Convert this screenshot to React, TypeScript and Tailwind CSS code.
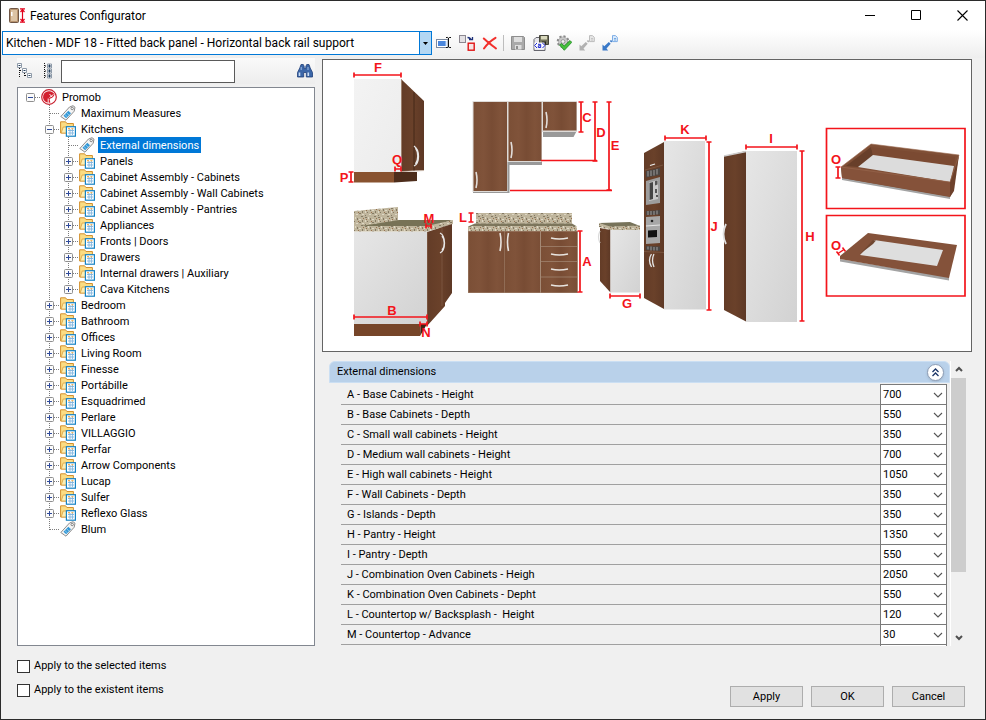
import { useState } from 'react'
import type { ReactNode } from 'react'
import clsx from 'clsx'

type NodeKind = 'root' | 'tag' | 'folder'

interface TreeRow {
  label: string
  depth: number
  kind: NodeKind
  open?: boolean
  last?: boolean
}

interface Dimension {
  code: string
  label: string
  value: number
}

const TREE: TreeRow[] = [
  { label: 'Promob', depth: 0, kind: 'root', open: true },
  { label: 'Maximum Measures', depth: 1, kind: 'tag' },
  { label: 'Kitchens', depth: 1, kind: 'folder', open: true },
  { label: 'External dimensions', depth: 2, kind: 'tag' },
  { label: 'Panels', depth: 2, kind: 'folder' },
  { label: 'Cabinet Assembly - Cabinets', depth: 2, kind: 'folder' },
  { label: 'Cabinet Assembly - Wall Cabinets', depth: 2, kind: 'folder' },
  { label: 'Cabinet Assembly - Pantries', depth: 2, kind: 'folder' },
  { label: 'Appliances', depth: 2, kind: 'folder' },
  { label: 'Fronts | Doors', depth: 2, kind: 'folder' },
  { label: 'Drawers', depth: 2, kind: 'folder' },
  { label: 'Internal drawers | Auxiliary', depth: 2, kind: 'folder' },
  { label: 'Cava Kitchens', depth: 2, kind: 'folder', last: true },
  { label: 'Bedroom', depth: 1, kind: 'folder' },
  { label: 'Bathroom', depth: 1, kind: 'folder' },
  { label: 'Offices', depth: 1, kind: 'folder' },
  { label: 'Living Room', depth: 1, kind: 'folder' },
  { label: 'Finesse', depth: 1, kind: 'folder' },
  { label: 'Portábille', depth: 1, kind: 'folder' },
  { label: 'Esquadrimed', depth: 1, kind: 'folder' },
  { label: 'Perlare', depth: 1, kind: 'folder' },
  { label: 'VILLAGGIO', depth: 1, kind: 'folder' },
  { label: 'Perfar', depth: 1, kind: 'folder' },
  { label: 'Arrow Components', depth: 1, kind: 'folder' },
  { label: 'Lucap', depth: 1, kind: 'folder' },
  { label: 'Sulfer', depth: 1, kind: 'folder' },
  { label: 'Reflexo Glass', depth: 1, kind: 'folder' },
  { label: 'Blum', depth: 1, kind: 'tag', last: true }
]

const DIMENSIONS: Dimension[] = [
  { code: 'A', label: 'Base Cabinets - Height', value: 700 },
  { code: 'B', label: 'Base Cabinets - Depth', value: 550 },
  { code: 'C', label: 'Small wall cabinets - Height', value: 350 },
  { code: 'D', label: 'Medium wall cabinets - Height', value: 700 },
  { code: 'E', label: 'High wall cabinets - Height', value: 1050 },
  { code: 'F', label: 'Wall Cabinets - Depth', value: 350 },
  { code: 'G', label: 'Islands - Depth', value: 350 },
  { code: 'H', label: 'Pantry - Height', value: 1350 },
  { code: 'I', label: 'Pantry - Depth', value: 550 },
  { code: 'J', label: 'Combination Oven Cabinets - Heigh', value: 2050 },
  { code: 'K', label: 'Combination Oven Cabinets - Depht', value: 550 },
  { code: 'L', label: 'Countertop w/ Backsplash -  Height', value: 120 },
  { code: 'M', label: 'Countertop - Advance', value: 30 }
]

const Icon = ({ children }: { children: ReactNode }) => (
  <svg
    aria-hidden="true"
    className="block shrink-0"
    height="16"
    viewBox="0 0 16 16"
    width="16"
  >
    {children}
  </svg>
)

const AppIcon = () => (
  <Icon>
    <rect fill="#b8946f" height="14" rx="1" stroke="#6f5645" width="9" x="0.5" y="0.5" />
    <rect fill="#dcc3a4" height="11" width="6" x="2" y="2" />
    <rect fill="#fff" height="4" width="1.5" x="2" y="4" />
    <path d="M11 .8h5M11 14.2h5M13.5 1.5v12M11.5 4l2-2.3 2 2.3M11.5 11l2 2.3 2-2.3" fill="none" stroke="#e2001a" strokeWidth="1.2" />
  </Icon>
)

const RootIcon = () => (
  <Icon>
    <circle cx="8" cy="8" fill="#fff" r="7.3" stroke="#c8202f" strokeWidth="1.2" />
    <path d="M8 2.2a5.8 5.8 0 1 0 1.3 11.4L8.6 10l3-1.2 2-3A5.9 5.9 0 0 0 8 2.2z" fill="#d3202f" />
    <path d="M7.2 14V9.5M8.5 8.5l4-3M8.5 5l3 3.5" stroke="#fff" strokeWidth="0.9" />
    <path d="M9.5 9.5l3.800-.5-2 3.500z" fill="#fff" />
  </Icon>
)

const TagIcon = () => (
  <Icon>
    <path d="M.8 11.5L9.5 2 13 .7l2 1.500-.8 4L6 15.200z" fill="#f4f4f4" stroke="#8c8c8c" strokeLinejoin="round" />
    <path d="M3.500 10.800l4.800-5 2.700 2.500-4.800 5z" fill="#3197d6" />
    <path d="M4.800 9.500l2.600 2.400M6.500 7.700l2.500 2.400" stroke="#b5dcf5" strokeWidth="0.7" />
    <circle cx="12.2" cy="3.5" fill="#fff" r="1.2" stroke="#666" strokeWidth="0.8" />
  </Icon>
)

const FolderIcon = () => (
  <Icon>
    <path d="M.6 12V.8h5l1.300 1.700h6.500V12z" fill="#fbdc83" stroke="#d3912f" />
    <path d="M1.200 12l2-6h10V12z" fill="#fdeeb2" stroke="#dba040" strokeWidth="0.8" />
    <rect fill="#fff" height="9.5" stroke="#1783c4" strokeWidth="1.2" width="9" x="6.4" y="5.7" />
    <path d="M8 9.500h6M8 12h6M10 8v6M12.400 8v6" stroke="#7fb3de" strokeWidth="0.9" />
    <path d="M8 7.700h2M11.400 7.700h2" stroke="#eb9a28" strokeWidth="1.1" />
  </Icon>
)

const KIND_ICON: Record<NodeKind, () => ReactNode> = {
  root: RootIcon,
  tag: TagIcon,
  folder: FolderIcon
}

const RenameIcon = () => (
  <Icon>
    <rect fill="#fff" height="8" stroke="#7c8aa0" width="11.5" x="0.5" y="4.5" />
    <rect fill="#4a86dc" height="5" width="8" x="2" y="6" />
    <path d="M9.500 6h1v5h-1z" fill="#bcd6f7" />
    <path d="M10 2.500h1.700l.8.800.8-.8H15M12.500 3v9M10 12.500h1.700l.8-.8.800.8H15" fill="none" stroke="#111" />
  </Icon>
)

const ReplaceIcon = () => (
  <Icon>
    <rect fill="#e3e1e4" height="7" stroke="#8b8790" width="6" x="0.5" y="0.5" />
    <path d="M8.500 2.500c2 0 3 .5 3.500 2.500M10 4.500h3.500V2" fill="none" stroke="#1c2f78" strokeWidth="1.3" />
    <rect fill="#f6e4e4" height="7" stroke="#e01515" strokeWidth="1.4" width="6" x="9.2" y="8.2" />
  </Icon>
)

const DeleteIcon = () => (
  <Icon>
    <path d="M1.800 3.500C5 6.500 9 9.500 14 13.500M13.500 2.800C9 5.500 5 9 2 13.500" fill="none" stroke="#f2302c" strokeLinecap="round" strokeWidth="2" />
  </Icon>
)

const SaveIcon = () => (
  <Icon>
    <path d="M1.500 1.500h12l1 1v12h-13z" fill="#a9a9a9" stroke="#8d8d8d" />
    <path d="M4 2h8v5H4zM5 10h6.500v4.500H5z" fill="#dedede" />
    <path d="M6 11h2v3H6z" fill="#8d8d8d" />
  </Icon>
)

const SaveXmlIcon = () => (
  <Icon>
    <path d="M1 4.500l2-2h9v13H1z" fill="#e6e6ea" stroke="#66666e" />
    <path d="M6.500.5h9v9h-9z" fill="#75755c" stroke="#44443a" />
    <path d="M8 1h6v3.500H8z" fill="#d8d8bc" />
    <path d="M9 6.500h4v3H9z" fill="#222" />
    <path d="M1.500 7.500h10v6h-10z" fill="#fff" />
    <path d="M4 8l-2.400 2.500L4 13M9.500 8l2.400 2.500L9.500 13M5 9.300h2.700v3.200H5.300v-1.700h2" fill="none" stroke="#1b26d0" />
  </Icon>
)

const GearCheckIcon = () => (
  <Icon>
    <circle cx="7" cy="6.5" fill="#b4b4b4" r="5" stroke="#8a8a8a" strokeDasharray="2 1.9" strokeWidth="2.6" />
    <circle cx="7" cy="6.5" fill="#c8c8c8" r="4.3" />
    <circle cx="7" cy="6.5" fill="#f5f5f5" r="1.9" stroke="#8a8a8a" strokeWidth="0.8" />
    <path d="M3.500 10l2-1.500 2.700 2.500L14 5.500l1.800 1.800-7.500 8z" fill="#46c13c" stroke="#1c8420" strokeWidth="0.8" />
  </Icon>
)

const TransferIcon = ({ muted = false }: { muted?: boolean }) => (
  <Icon>
    <path
      d="M.5 15.500V9.500l1.800 1.800 4.500-4.300 1.900 1.800-4.200 4.700 1.700 2z"
      fill={muted ? '#b1b1b1' : '#3a79c8'}
    />
    <path d="M8.500 6.800l1.200-1.200" stroke={muted ? '#b1b1b1' : '#3a79c8'} strokeWidth="2" />
    <path
      d="M10.500.6h3l1.800 1.800v4.200h-4.800z"
      fill={muted ? '#e6e6e6' : '#dcebfb'}
      stroke={muted ? '#bcbcbc' : '#7daee6'}
    />
    <path d="M12 3.500h2M12 5h2" stroke={muted ? '#bcbcbc' : '#5b98dc'} strokeWidth="0.8" />
  </Icon>
)

const CollapseAllIcon = () => (
  <Icon>
    <path d="M2.500 5v10M3 7.500h3M7.500 10v4M8 12.500h3" stroke="#111" strokeDasharray="1 1" />
    <path d="M.5.500h4v4h-4zM5.500 5.500h4v4H5.500zM10.500 10.500h4v4h-4z" fill="#fff" stroke="#8e9aa8" />
    <path d="M1.500 2.500h2M6.500 7.500h2M11.500 12.500h2" stroke="#24405e" />
  </Icon>
)

const ExpandAllIcon = () => (
  <Icon>
    <path d="M5.500 0v16M6 3h3M6 8h3M6 13h3" stroke="#111" strokeDasharray="1 1" />
    <path d="M8.500 1h4v4h-4zM8.500 6h4v4h-4zM8.500 11h4v4h-4z" fill="#fff" stroke="#8e9aa8" />
    <path d="M9 3h3M10.500 1.500v3M9 8h3M10.500 6.500v3M9 13h3M10.500 11.500v3" stroke="#24405e" />
  </Icon>
)

const SearchIcon = () => (
  <Icon>
    <path d="M4 1.500h2.300l.9 2v2h1.600v-2l.9-2H12l1.200 3.500 2.300 4.500v4.500H9.300V9.500H6.700V14H.500V9.500L2.800 5z" fill="#3b66a8" stroke="#1f3f78" strokeWidth="0.8" />
    <path d="M2.500 9.500v3.500M11.300 9.500v3.500" stroke="#c9dcf4" strokeWidth="1.6" />
    <path d="M4.200 4v3M11 4v3" stroke="#9dbbe3" />
  </Icon>
)

const Expander = ({ open }: { open: boolean }) => (
  <svg className="block" height="16" viewBox="0 0 19 16" width="19">
    <rect fill="#fbfbfb" height="8" rx="1" stroke="#8f8f8f" width="8" x="5.5" y="4.5" />
    <path d={open ? 'M7 8.500h5' : 'M7 8.500h5M9.500 6v5'} stroke="#2f4a9a" />
  </svg>
)

const Branch = ({ row, level }: { row: TreeRow; level: number }) => {
  const own = level === row.depth

  return (
    <svg aria-hidden="true" className="block" height="16" viewBox="0 0 19 16" width="19">
      {level > 0 && (
        <path
          d={own && row.last ? 'M9.500 0v9' : 'M9.500 0v16'}
          stroke="#7d7d7d"
          strokeDasharray="1 1"
        />
      )}
      {own && <path d="M10 8.500h9" stroke="#7d7d7d" strokeDasharray="1 1" />}
    </svg>
  )
}

const TreeItem = ({
  row,
  selected,
  onSelect
}: {
  row: TreeRow
  selected: boolean
  onSelect: (label: string) => void
}) => {
  const NodeIcon = KIND_ICON[row.kind]
  const ancestors = Array.from({ length: row.depth }, (_, level) => level)

  return (
    <li
      aria-level={row.depth + 1}
      aria-selected={selected}
      className="flex h-4 items-center"
      role="treeitem"
    >
      {ancestors.map(level => (
        <Branch key={level} level={level} row={row} />
      ))}
      <div className="relative mr-px">
        <Branch level={row.depth} row={row} />
        {row.kind !== 'tag' && (
          <button
            aria-label={`Toggle ${row.label}`}
            className="absolute inset-0"
            type="button"
          >
            <Expander open={!!row.open} />
          </button>
        )}
      </div>
      <NodeIcon />
      <button
        className={clsx(
          'ml-[3px] flex h-4 items-start px-[2px] leading-[18px] whitespace-nowrap',
          selected && 'bg-[#0078d7] text-white'
        )}
        onClick={() => onSelect(row.label)}
        type="button"
      >
        {row.label}
      </button>
    </li>
  )
}

const ToolButton = ({ label, children }: { label: string; children: ReactNode }) => (
  <button
    aria-label={label}
    className="flex h-6 w-[23px] items-center justify-center hover:bg-[#d8eaf9]"
    type="button"
  >
    {children}
  </button>
)

// Red I-shaped dimension line, always horizontal or vertical
const Measure = ({ x1, y1, x2, y2 }: { x1: number; y1: number; x2: number; y2: number }) => {
  const ticks =
    y1 === y2
      ? `M${x1} ${y1 - 2.5}v5M${x2} ${y1 - 2.5}v5`
      : `M${x1 - 2.5} ${y1}h5M${x1 - 2.5} ${y2}h5`

  return <path d={`M${x1} ${y1}L${x2} ${y2}${ticks}`} fill="none" stroke="#f3141b" strokeWidth="1.7" />
}

const LETTERS: [string, number, number][] = [
  ['F', 378, 72],
  ['Q', 397, 164],
  ['P', 344, 182],
  ['M', 429, 223],
  ['B', 392, 315],
  ['N', 426, 337],
  ['C', 587, 122],
  ['D', 601, 137],
  ['E', 615, 150],
  ['L', 463, 222],
  ['A', 587, 266],
  ['G', 627, 308],
  ['K', 685, 134],
  ['J', 714, 231],
  ['I', 771, 143],
  ['H', 810, 241],
  ['O', 836, 164],
  ['O', 836, 250]
]

const CabinetDiagram = () => (
  <svg
    aria-label="Kitchen cabinets with dimension letters"
    className="block w-full"
    role="img"
    viewBox="323 60 648 291"
  >
    <defs>
      <linearGradient id="wood" x1="0" x2="1" y1="0" y2="0">
        <stop offset="0" stopColor="#7b4f36" />
        <stop offset="0.3" stopColor="#80533a" />
        <stop offset="0.55" stopColor="#784c34" />
        <stop offset="0.8" stopColor="#80533a" />
        <stop offset="1" stopColor="#7a4e36" />
      </linearGradient>
      <linearGradient id="darkWood" x1="0" x2="1" y1="0" y2="0">
        <stop offset="0" stopColor="#633c27" />
        <stop offset="0.5" stopColor="#6a412a" />
        <stop offset="1" stopColor="#5d3825" />
      </linearGradient>
      <linearGradient id="side" x1="0" x2="1" y1="0" y2="1">
        <stop offset="0" stopColor="#e6e6e6" />
        <stop offset="1" stopColor="#d2d2d2" />
      </linearGradient>
      <linearGradient id="lightSide" x1="0" x2="1" y1="0" y2="1">
        <stop offset="0" stopColor="#f3f3f3" />
        <stop offset="1" stopColor="#ececec" />
      </linearGradient>
      <pattern height="9" id="granite" patternUnits="userSpaceOnUse" width="13">
        <rect fill="#bfb59c" height="9" width="13" />
        <path d="M1 1h2v1H1zM6 2h1v2H6zM10 0h2v1h-2zM3 5h1v1H3zM8 6h2v1H8zM11 4h1v2h-1zM1 8h1v1H1z" fill="#857a64" />
        <path d="M4 1h1v2H4zM8 3h2v1H8zM1 4h1v2H1zM5 7h2v1H5zM11 7h2v1h-2z" fill="#ded7c4" />
        <path d="M2 3h1v1H2zM7 5h1v1H7zM12 2h1v1h-1z" fill="#97704f" />
      </pattern>
    </defs>

    {/* wall cabinet, side view */}
    <path d="M354 79h47v93h-47z" fill="url(#lightSide)" />
    <path d="M401 79l23 22v69l-23 1.500z" fill="url(#darkWood)" />
    <path d="M414 92v79" stroke="#3e2315" strokeWidth="0.8" />
    <path d="M401.500 79v92.500l22.500-1" fill="none" stroke="#b49d8d" strokeWidth="0.7" />
    <path d="M354 172h40v10.500h-40z" fill="#88522f" />
    <path d="M394 172h23v9l-23 1.500z" fill="#4d2d1b" />
    <path d="M414 146c6 4 6 17 0 20M415.500 148c3 4 3 12 0 16" fill="none" stroke="#e8e8e8" strokeWidth="1.3" />

    {/* base cabinet, side view */}
    <path d="M354 211l44-4v14l-33 5-11 2z" fill="url(#granite)" />
    <path d="M361 226l38-6 54 0-26 8-73 0z" fill="#777256" />
    <path d="M354 226l73 0 26-6v4l-26 7.500h-73z" fill="url(#granite)" />
    <path d="M354 232h73v92h-73z" fill="url(#side)" />
    <path d="M427 232l25-8v69l-7 10v3l-18 20z" fill="url(#darkWood)" />
    <path d="M442 228v78M427.500 232v91" stroke="#8d6a55" strokeWidth="0.5" />
    <path d="M354 324h67l-1 12h-66z" fill="#764529" />
    <path d="M421 324h6l-7 12z" fill="#3f2415" />
    <path d="M440 233c6 3 6 17 0 20M442 236c3 3 3 11 0 14" fill="none" stroke="#e8e8e8" strokeWidth="1.3" />

    {/* wall cabinets, front view */}
    <path d="M473 101.500h104v29l-3.500 6.500H543v-6h-1v34h-32.500v28H473z" fill="#999" />
    <path d="M472.500 101h35v91h-35zM507.500 101h34.500v61h-34.500zM542 101h35v31h-35z" fill="#dedbd8" />
    <path d="M473.500 102h33.500v89h-33.500z" fill="url(#wood)" />
    <path d="M508.500 102h33v59h-33z" fill="url(#wood)" />
    <path d="M543 102h33.500v28.500H543z" fill="url(#wood)" />
    <path d="M476 172q2 8 0 16M511 142q2 8 0 16M546 112q2 8 0 16" fill="none" stroke="#e2ddda" strokeWidth="1.6" />

    {/* base cabinets, front view */}
    <path d="M476 213h96v11h-96z" fill="url(#granite)" />
    <path d="M475 223.500h97l5 3H468z" fill="#7d765c" />
    <path d="M468 226h109v5H468z" fill="url(#granite)" />
    <path d="M468 231h110v62H468" fill="#a58975" />
    <path d="M468.500 231.500h35.500v61h-35.500z" fill="url(#wood)" />
    <path d="M504.500 231.500h35.500v61h-35.500z" fill="url(#wood)" />
    <path d="M541 231.500h36v61h-36z" fill="url(#wood)" />
    <path d="M541 246.500h36M541 261.500h36M541 277h36" stroke="#a58975" strokeWidth="0.7" />
    <path d="M500 233q2 9 0 18M508.500 233q-2 9 0 18M551 238q8 2 17 0M551 254q8 2 17 0M551 269q8 2 17 0M551 285q8 2 17 0" fill="none" stroke="#e8e4e0" strokeWidth="1.6" />

    {/* island */}
    <path d="M599 223l31-1 10 4-30 2z" fill="#77735a" />
    <path d="M599 223l11 3.500 30-1v4.500h-30l-11-3z" fill="url(#granite)" />
    <path d="M600 228l10.500 2v62.500L600 281z" fill="url(#darkWood)" />
    <path d="M610.500 230H640v62.500h-29.500z" fill="url(#side)" />
    <path d="M600 231q-3 6 0 12" fill="none" stroke="#dadada" strokeWidth="1.2" />

    {/* oven tower */}
    <path d="M644 153l20-11v167l-20-11z" fill="url(#darkWood)" />
    <path d="M664 141h41l1 168.500h-42z" fill="url(#side)" />
    <path d="M644 251.500l20 1M645 170l18-5" stroke="#8d6a55" strokeWidth="0.5" />
    <path d="M650 165.500l5-1.500" stroke="#eee" strokeWidth="1.3" />
    <path d="M646 171l14-3v7l-14 2.500zM646 211l14-1v4.500l-14 .5zM646 246l14 .5v4.500l-14-1z" fill="#4a4644" />
    <path d="M648 171v5.500M651 170.500v5.500M654 170v5.500M657 169v5.500M648 211v4M651 211v4M654 211v4M657 210.500v4M648 246.500v3M651 246.500v4M654 247v3.500M657 247v3.500" stroke="#b5b3b2" strokeWidth="0.8" />
    <path d="M646 181l14-4v26l-14 2z" fill="#9d9d9d" />
    <path d="M649 182.500l9-2.500v19l-9 2z" fill="#c9c9c9" />
    <path d="M649.500 183l3.500-1v17l-3.500 1z" fill="#454545" />
    <path d="M655 181l2.500-.5v4l-2.500 1zM655 189h2v4h-2zM656 195h2v2h-2z" fill="#555" />
    <path d="M646 217l14-1v27l-14 1z" fill="#a7a7a7" />
    <path d="M646 226l14-1" stroke="#e4e4e4" strokeWidth="1.2" />
    <path d="M648 230.500l9-.5v7l-9 .5z" fill="#111" />
    <circle cx="652" cy="221" fill="#222" r="1.3" />
    <path d="M651.500 254q-4 6 0 13M654 254q-3 6 0 13" fill="none" stroke="#e4e4e4" strokeWidth="1.3" />

    {/* pantry */}
    <path d="M724 156l22-5v170.500L724 310z" fill="url(#darkWood)" />
    <path d="M724 156l22-4.500" stroke="#cfcfcf" strokeWidth="1.5" />
    <path d="M746 151h51v171h-51z" fill="url(#side)" />
    <path d="M726 224q-5 10 0 20" fill="none" stroke="#e0e0e0" strokeWidth="1.8" />

    {/* drawer */}
    <path d="M842 177l108 19v3L842 180z" fill="#a3a3a3" />
    <path d="M841 167l30-23 88 11-7 38-2 4-108-19z" fill="#7f4f36" />
    <path d="M846 166l25-19 2 8-15 12z" fill="#683f2a" />
    <path d="M871 147l84 10-1 9-81-11z" fill="#7b4a32" />
    <path d="M873 155l81 11-4 16-92-15z" fill="#dcdcdc" />
    <path d="M841 167l17 1 92 14v14.500L842 178z" fill="#85523a" />
    <path d="M950 182l9-27-5 36-4 6z" fill="#6d412b" />
    <path d="M841 167l30-23 88 11-9 27z" fill="none" stroke="#9a6a50" strokeWidth="0.6" />

    {/* glass door */}
    <path d="M840 259l109 18v3.500L840 261.500z" fill="#a3a3a3" />
    <path d="M840 256l28-23 89 12-8 33-109-19z" fill="#84523a" />
    <path d="M874 240l69 10-6 16-77-11z" fill="#dedede" />
    <path d="M873 240l3 .5-3 3.500-13 10z" fill="#6f4630" />

    <path d="M826.500 128.500H965v80H826.500zM826.500 215.500H965v80.500H826.500z" fill="none" stroke="#f3141b" strokeWidth="1.7" />
    <path d="M541 160.500h56M510 190.500h102" stroke="#f3141b" strokeWidth="1.5" />
    <path d="M838 253.500l6-4M836.500 251.500l3 4M842.500 247.500l3 4" stroke="#f3141b" strokeWidth="1.5" />
    <Measure x1={354} x2={401} y1={75} y2={75} />
    <Measure x1={395} x2={401} y1={169} y2={169} />
    <Measure x1={351} x2={351} y1={172} y2={182} />
    <Measure x1={426} x2={431} y1={226} y2={226} />
    <Measure x1={354} x2={427} y1={317} y2={317} />
    <Measure x1={420} x2={427} y1={324} y2={324} />
    <Measure x1={581} x2={581} y1={102} y2={132} />
    <Measure x1={595} x2={595} y1={102} y2={161} />
    <Measure x1={609} x2={609} y1={102} y2={190} />
    <Measure x1={471} x2={471} y1={213} y2={222} />
    <Measure x1={580} x2={580} y1={231} y2={292} />
    <Measure x1={610} x2={640} y1={296} y2={296} />
    <Measure x1={665} x2={706} y1={138} y2={138} />
    <Measure x1={709} x2={709} y1={142} y2={310} />
    <Measure x1={746} x2={797} y1={147} y2={147} />
    <Measure x1={802} x2={802} y1={151} y2={321} />
    <Measure x1={838} x2={838} y1={167} y2={178} />
    <g
      className="font-['Liberation_Sans'] text-[13px] font-bold"
      fill="#f3141b"
      textAnchor="middle"
    >
      {LETTERS.map(([letter, x, y]) => (
        <text key={`${letter}${y}`} x={x} y={y}>
          {letter}
        </text>
      ))}
    </g>
  </svg>
)

const DimensionRow = ({ dimension }: { dimension: Dimension }) => {
  const id = `dimension-${dimension.code}`

  return (
    <div className="flex h-5">
      <label
        className="flex-1 border-b border-[#a0a0a0] pl-[6px] leading-5 whitespace-pre"
        htmlFor={id}
      >
        {`${dimension.code} - ${dimension.label}`}
      </label>
      <div className="relative w-[67px]">
        <select
          className="h-5 w-full appearance-none border-x border-b border-[#7a7a7a] bg-white pl-[2px] leading-4 outline-none"
          defaultValue={dimension.value}
          id={id}
        >
          <option>{dimension.value}</option>
        </select>
        <svg
          aria-hidden="true"
          className="pointer-events-none absolute top-[7px] right-1"
          height="6"
          viewBox="0 0 10 6"
          width="10"
        >
          <path d="M1 1l4 4 4-4" fill="none" stroke="#555" strokeWidth="1.1" />
        </svg>
      </div>
    </div>
  )
}

const DialogButton = ({ children }: { children: ReactNode }) => (
  <button
    className="h-[21px] w-[73px] border border-[#adadad] bg-[#e1e1e1] leading-4 hover:border-[#0078d7] hover:bg-[#e5f1fb]"
    type="button"
  >
    {children}
  </button>
)

const CheckField = ({ label }: { label: string }) => (
  <label className="flex h-4 items-center gap-1 leading-[18px]">
    <input
      className="h-[13px] w-[13px] appearance-none border border-[#333] bg-white checked:bg-[#0078d7]"
      type="checkbox"
    />
    {label}
  </label>
)

export default function App() {
  const [selected, setSelected] = useState<string>('External dimensions')
  const [search, setSearch] = useState<string>('')

  return (
    <div className="flex min-h-screen flex-col border border-[#2b2b2b] bg-[#f0f0f0] font-[Roboto,sans-serif] text-[11px] text-black">
      <header className="flex h-[29px] items-center bg-white pl-2">
        <AppIcon />
        <h1 className="ml-[5px] flex-1 text-[12px] leading-4">Features Configurator</h1>
        <div className="flex">
          <button aria-label="Minimize" className="flex h-7 w-[46px] items-center justify-center" type="button">
            <svg height="11" viewBox="0 0 11 11" width="11">
              <path d="M0 5.500h10" stroke="#000" />
            </svg>
          </button>
          <button aria-label="Maximize" className="flex h-7 w-[46px] items-center justify-center" type="button">
            <svg height="11" viewBox="0 0 11 11" width="11">
              <path d="M.5.5h9v9h-9z" fill="none" stroke="#000" />
            </svg>
          </button>
          <button aria-label="Close" className="flex h-7 w-[46px] items-center justify-center" type="button">
            <svg height="11" viewBox="0 0 11 11" width="11">
              <path d="M.5.5l10 10M10.500.5l-10 10" stroke="#000" strokeWidth="1.1" />
            </svg>
          </button>
        </div>
      </header>

      <div className="flex h-7 items-start bg-linear-to-b from-white to-[#eeeeee] pt-px pl-px">
        <div className="relative w-[430px]">
          <select
            aria-label="Configuration"
            className="block h-6 w-full appearance-none border border-[#0078d7] bg-white pl-[3px] text-[12px] outline-none"
          >
            <option>Kitchen - MDF 18 - Fitted back panel - Horizontal back rail support</option>
          </select>
          <div className="pointer-events-none absolute inset-y-0 right-0 flex w-[13px] items-center justify-center border border-[#0078d7] bg-[#b3d7f3]">
            <svg aria-hidden="true" height="3" viewBox="0 0 5 3" width="5">
              <path d="M0 0h5L2.500 3z" />
            </svg>
          </div>
        </div>
        <div className="flex items-center">
          <ToolButton label="Rename"><RenameIcon /></ToolButton>
          <ToolButton label="Replace"><ReplaceIcon /></ToolButton>
          <ToolButton label="Delete"><DeleteIcon /></ToolButton>
          <div className="mx-[2px] h-4 w-px bg-[#bdbdbd]" />
          <ToolButton label="Save"><SaveIcon /></ToolButton>
          <ToolButton label="Save XML"><SaveXmlIcon /></ToolButton>
          <ToolButton label="Validate"><GearCheckIcon /></ToolButton>
          <ToolButton label="Import"><TransferIcon muted /></ToolButton>
          <ToolButton label="Export"><TransferIcon /></ToolButton>
        </div>
      </div>

      <main className="flex flex-1 pr-[13px] pl-4">
        <section className="flex w-[298px] shrink-0 flex-col">
          <div className="flex h-[26px] items-center bg-linear-to-b from-[#fafafa] to-[#ededed]">
            <button aria-label="Collapse all" type="button"><CollapseAllIcon /></button>
            <button aria-label="Expand all" className="ml-[6px]" type="button"><ExpandAllIcon /></button>
            <input
              aria-label="Search"
              className="ml-[6px] h-[23px] w-[174px] border border-[#5a5a5a] bg-white px-1 outline-none"
              onChange={event => setSearch(event.target.value)}
              type="text"
              value={search}
            />
            <button aria-label="Find" className="mr-[2px] ml-auto" type="button"><SearchIcon /></button>
          </div>
          <ul
            className="mt-[3px] flex-1 border border-[#828790] bg-white pt-px pl-[3px]"
            role="tree"
          >
            {TREE.map(row => (
              <TreeItem
                key={row.label}
                onSelect={setSelected}
                row={row}
                selected={row.label === selected}
              />
            ))}
          </ul>
        </section>

        <section className="ml-[7px] flex min-w-0 flex-1 flex-col">
          <div className="mt-px border border-[#646464] bg-white">
            <CabinetDiagram />
          </div>
          <div className="mt-[9px] flex flex-1 pr-[5px] pl-[7px]">
            <div className="flex flex-1 flex-col">
              <div className="flex h-[22px] items-center rounded-t-md border border-[#cbdff3] bg-[#b9d1ea] pr-[5px] pl-[7px]">
                <h2 className="flex-1 leading-4">External dimensions</h2>
                <button
                  aria-label="Collapse group"
                  className="flex h-[17px] w-[17px] items-center justify-center rounded-full border border-[#8d9db5] bg-white shadow-sm"
                  type="button"
                >
                  <svg height="9" viewBox="0 0 9 9" width="9">
                    <path d="M1.500 4l3-3 3 3M1.500 8l3-3 3 3" fill="none" stroke="#1b3567" strokeWidth="1.3" />
                  </svg>
                </button>
              </div>
              <div className="mt-px mr-[3px] ml-3 flex-1">
                <div className="ml-auto h-px w-[67px] bg-[#7a7a7a]" />
                {DIMENSIONS.map(dimension => (
                  <DimensionRow dimension={dimension} key={dimension.code} />
                ))}
                <div className="ml-auto h-px w-[67px] border-x border-[#7a7a7a] bg-white" />
              </div>
            </div>
            <div className="flex w-[17px] flex-col items-center border-l border-white">
              <button aria-label="Scroll up" className="flex h-[17px] w-full items-center justify-center" type="button">
                <svg height="7" viewBox="0 0 8 7" width="8">
                  <path d="M1 5l3-3 3 3" fill="none" stroke="#505050" strokeWidth="2" />
                </svg>
              </button>
              <div className="w-full flex-1">
                <div className="h-[194px] w-[15px] bg-[#cdcdcd]" />
              </div>
              <button aria-label="Scroll down" className="flex h-[17px] w-full items-center justify-center" type="button">
                <svg height="7" viewBox="0 0 8 7" width="8">
                  <path d="M1 2l3 3 3-3" fill="none" stroke="#505050" strokeWidth="2" />
                </svg>
              </button>
            </div>
          </div>
        </section>
      </main>

      <footer className="flex h-[73px] justify-between pr-5 pl-4">
        <div className="flex flex-col gap-2 pt-3">
          <CheckField label="Apply to the selected items" />
          <CheckField label="Apply to the existent items" />
        </div>
        <div className="flex gap-2 pt-10">
          <DialogButton>Apply</DialogButton>
          <DialogButton>OK</DialogButton>
          <DialogButton>Cancel</DialogButton>
        </div>
      </footer>
    </div>
  )
}
